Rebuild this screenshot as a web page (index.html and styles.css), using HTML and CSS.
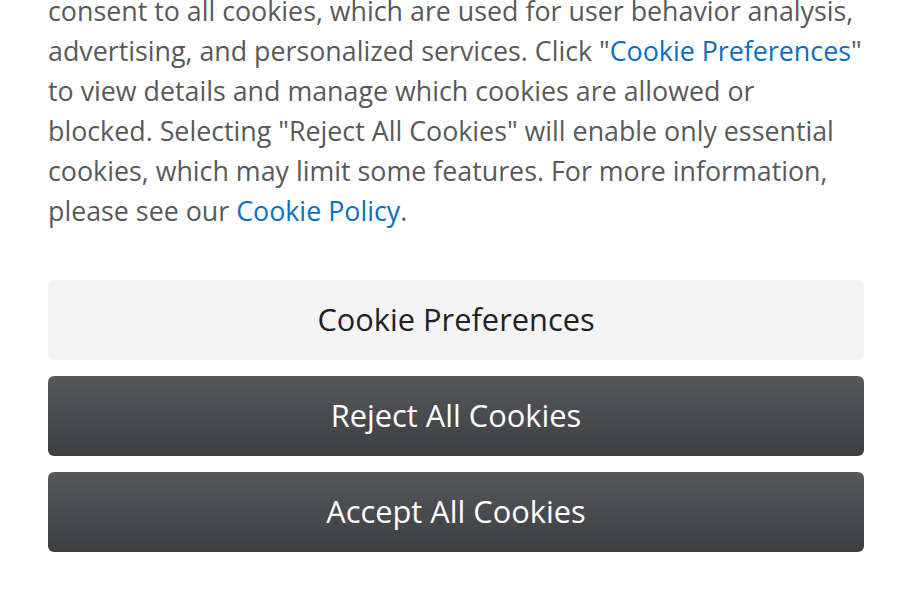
FILE: index.html
```html
<!DOCTYPE html>
<html>
<head>
<meta charset="utf-8">
<link rel="stylesheet" href="styles.css">
</head>
<body>
<div class="banner">
  <p class="notice">consent to all cookies, which are used for user behavior analysis, advertising, and personalized services. Click "<a href="#">Cookie Preferences</a>" to view details and manage which cookies are allowed or blocked. Selecting "Reject All Cookies" will enable only essential cookies, which may limit some features. For more information, please see our <a href="#">Cookie Policy</a>.</p>
  <div class="actions">
    <button class="btn btn-light">Cookie Preferences</button>
    <button class="btn btn-dark">Reject All Cookies</button>
    <button class="btn btn-dark">Accept All Cookies</button>
  </div>
</div>
</body>
</html>
```
FILE: styles.css
```css
html, body {
  margin: 0;
  padding: 0;
  background: #ffffff;
}
body {
  font-family: "Open Sans", "Noto Sans", sans-serif;
  overflow: hidden;
}
.banner {
  padding: 0 48px;
  margin-top: -9px;
}
.notice {
  margin: 0;
  font-size: 26.8px;
  line-height: 40px;
  color: #595959;
}
.notice a {
  color: #0a6fc2;
  text-decoration: none;
}
.actions {
  margin-top: 49px;
  display: flex;
  flex-direction: column;
  gap: 16px;
}
.btn {
  height: 80px;
  border: none;
  border-radius: 6px;
  font-family: "Open Sans", "Noto Sans", sans-serif;
  font-size: 30.8px;
  padding: 0 0 2px;
}
.btn-light {
  background: #f4f4f4;
  color: #222222;
}
.btn-dark {
  background: linear-gradient(to bottom, #55575a, #3d3f42);
  color: #ffffff;
}
```
